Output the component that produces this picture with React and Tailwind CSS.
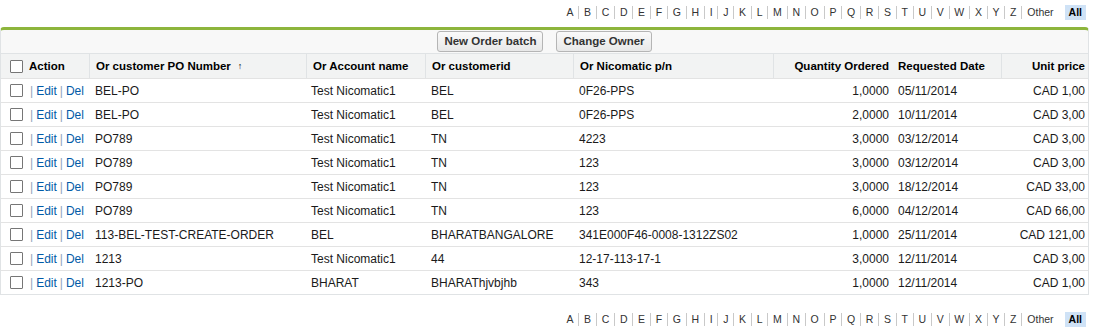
import React from 'react';

const LETTERS = ['A','B','C','D','E','F','G','H','I','J','K','L','M','N','O','P','Q','R','S','T','U','V','W','X','Y','Z'];

const ROWS = [
    { po: 'BEL-PO', account: 'Test Nicomatic1', cust: 'BEL', pn: '0F26-PPS', qty: '1,0000', date: '05/11/2014', price: 'CAD 1,00' },
    { po: 'BEL-PO', account: 'Test Nicomatic1', cust: 'BEL', pn: '0F26-PPS', qty: '2,0000', date: '10/11/2014', price: 'CAD 3,00' },
    { po: 'PO789', account: 'Test Nicomatic1', cust: 'TN', pn: '4223', qty: '3,0000', date: '03/12/2014', price: 'CAD 3,00' },
    { po: 'PO789', account: 'Test Nicomatic1', cust: 'TN', pn: '123', qty: '3,0000', date: '03/12/2014', price: 'CAD 3,00' },
    { po: 'PO789', account: 'Test Nicomatic1', cust: 'TN', pn: '123', qty: '3,0000', date: '18/12/2014', price: 'CAD 33,00' },
    { po: 'PO789', account: 'Test Nicomatic1', cust: 'TN', pn: '123', qty: '6,0000', date: '04/12/2014', price: 'CAD 66,00' },
    { po: '113-BEL-TEST-CREATE-ORDER', account: 'BEL', cust: 'BHARATBANGALORE', pn: '341E000F46-0008-1312ZS02', qty: '1,0000', date: '25/11/2014', price: 'CAD 121,00' },
    { po: '1213', account: 'Test Nicomatic1', cust: '44', pn: '12-17-113-17-1', qty: '3,0000', date: '12/11/2014', price: 'CAD 3,00' },
    { po: '1213-PO', account: 'BHARAT', cust: 'BHARAThjvbjhb', pn: '343', qty: '1,0000', date: '12/11/2014', price: 'CAD 1,00' },
];

const GRID = 'grid grid-cols-[88px_217px_119px_148px_200px_120px_108px_87px]';

// Square checkbox like the classic list view
const Box = () => (
    <span className="inline-block w-[13px] h-[13px] shrink-0 border border-[#767676] rounded-[1px] bg-white" />
);

// A | B | C ... Other All
const Rolodex = () => (
    <div className="w-[1089px] h-[24px] flex items-center justify-end pr-[3px] text-[10.5px] text-[#333]">
        {LETTERS.map((l, i) => (
            <span
                key={l}
                className={`px-[4.8px] leading-[13px] ${i > 0 ? 'border-l border-[#c9c9c9]' : ''}`}
            >
                {l}
            </span>
        ))}
        <span className="px-[5px] leading-[13px] border-l border-[#c9c9c9]">Other</span>
        <span className="ml-[6px] px-[4px] leading-[13px] py-[1px] bg-[#cfe2f6] font-bold text-black">All</span>
    </div>
);

const App = () => {
    return (
        <div className="w-[1097px] h-[330px] bg-white font-['Liberation_Sans',Arial,sans-serif] text-[12px] text-[#1a1a1a]">
            <Rolodex />

            <div className="mt-[3px] w-[1089px] border-t-[3px] border-t-[#8db53c] border-x border-b border-x-[#e0e3e5] border-b-[#e0e3e5] rounded-t-[4px] bg-[#f8f8f8]">
                {/* Button bar */}
                <div className="h-[23px] flex items-center justify-center gap-[13px]">
                    <button className="h-[21px] px-[6px] text-[11.5px] font-bold text-[#333] border border-[#b5b5b5] rounded-[3px] bg-gradient-to-b from-[#fafafa] to-[#e8e8e8]">
                        New Order batch
                    </button>
                    <button className="h-[21px] px-[6px] text-[11.5px] font-bold text-[#333] border border-[#b5b5b5] rounded-[3px] bg-gradient-to-b from-[#fafafa] to-[#e8e8e8]">
                        Change Owner
                    </button>
                </div>

                {/* Header row */}
                <div className={`${GRID} h-[25px] bg-[#f2f3f3] border-t border-[#e0e3e5] text-[11.5px] font-bold text-black`}>
                    <div className="flex items-center gap-[6px] pl-[9px] pt-[1px]">
                        <Box />
                        <span>Action</span>
                    </div>
                    <div className="flex items-center pl-[6px] pt-[1px] border-l border-[#e0e3e5]">
                        Or customer PO Number
                        <span className="ml-[7px] text-[9px] font-normal">↑</span>
                    </div>
                    <div className="flex items-center pl-[6px] pt-[1px] border-l border-[#e0e3e5]">Or Account name</div>
                    <div className="flex items-center pl-[6px] pt-[1px] border-l border-[#e0e3e5]">Or customerid</div>
                    <div className="flex items-center pl-[6px] pt-[1px] border-l border-[#e0e3e5]">Or Nicomatic p/n</div>
                    <div className="flex items-center justify-end pr-[4px] pt-[1px] border-l border-[#e0e3e5]">Quantity Ordered</div>
                    <div className="flex items-center pl-[5px] pt-[1px]">Requested Date</div>
                    <div className="flex items-center justify-end pr-[3px] pt-[1px] border-l border-[#e0e3e5]">Unit price</div>
                </div>

                {/* Data rows */}
                {ROWS.map((r, i) => (
                    <div key={i} className={`${GRID} h-[24px] bg-white border-t border-[#e3e3e3]`}>
                        <div className="flex items-center pl-[9px]">
                            <Box />
                            <span className="ml-[7px] text-[#8ea4ba]">|</span>
                            <span className="ml-[3px] text-[#015ba7]">Edit</span>
                            <span className="ml-[3px] text-[#8ea4ba]">|</span>
                            <span className="ml-[3px] text-[#015ba7]">Del</span>
                        </div>
                        <div className="flex items-center pl-[6px]">{r.po}</div>
                        <div className="flex items-center pl-[5px]">{r.account}</div>
                        <div className="flex items-center pl-[6px]">{r.cust}</div>
                        <div className="flex items-center pl-[6px]">{r.pn}</div>
                        <div className="flex items-center justify-end pr-[4px]">{r.qty}</div>
                        <div className="flex items-center pl-[5px]">{r.date}</div>
                        <div className="flex items-center justify-end pr-[3px]">{r.price}</div>
                    </div>
                ))}
            </div>

            <div className="mt-[12px]">
                <Rolodex />
            </div>
        </div>
    );
};

export default App;
